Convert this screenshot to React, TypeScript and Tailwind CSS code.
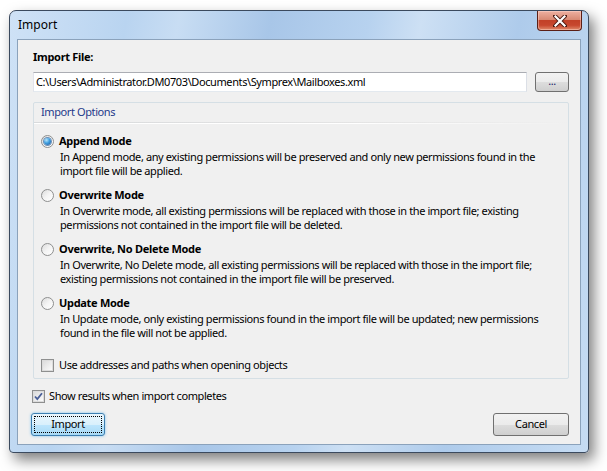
import React from "react";

const FONT = "font-['Noto_Sans','Segoe_UI',sans-serif]";

function Radio({ checked }: { checked?: boolean }) {
  return (
    <span className="relative flex h-[13px] w-[13px] shrink-0 items-center justify-center rounded-full border border-[#8e8f8f] bg-gradient-to-br from-[#dcdcdc] via-[#f4f4f4] to-[#ffffff]">
      {checked && (
        <span className="h-[7px] w-[7px] rounded-full bg-[radial-gradient(circle_at_35%_30%,#b9e6fb_0%,#3f9fe0_45%,#1c4f93_100%)] shadow-[0_0_0_1px_#6c8fb6]" />
      )}
    </span>
  );
}

function Check({ checked }: { checked?: boolean }) {
  return (
    <span className="flex h-[13px] w-[13px] shrink-0 items-center justify-center border border-[#8e8f8f] bg-white">
      <span className="flex h-[11px] w-[11px] items-center justify-center border border-[#dcdcdc] bg-gradient-to-br from-[#dcdcdc] to-[#fbfbfb]">
        {checked && (
          <svg width="9" height="9" viewBox="0 0 9 9">
            <path d="M1 4.5 L3.3 7 L8 1.2" fill="none" stroke="#4a5f97" strokeWidth="1.8" />
          </svg>
        )}
      </span>
    </span>
  );
}

function Option({ label, lines, checked }: { label: string; lines: string[]; checked?: boolean }) {
  return (
    <div className="flex flex-col">
      <div className="flex h-[14px] items-center gap-[5px]">
        <Radio checked={checked} />
        <span className="font-bold tracking-[-0.3px]">{label}</span>
      </div>
      <div className="mt-[2px] pl-[19px] leading-[14px]">
        {lines.map((l) => (
          <div key={l} className="whitespace-nowrap">{l}</div>
        ))}
      </div>
    </div>
  );
}

export default function App() {
  return (
    <div className={`h-[471px] w-[607px] bg-white pl-[9px] pt-[10px] text-[11px] tracking-[-0.4px] text-black ${FONT}`}>
      <div className="flex h-[443px] w-[580px] flex-col rounded-t-[7px] rounded-b-[4px] border border-[#3b4a5e] bg-[linear-gradient(100deg,#cfe2f6_0%,#b9d4f0_18%,#c8ddf3_26%,#a8c6e8_40%,#b7d2ef_55%,#cde0f4_63%,#aecbeb_78%,#c6dcf3_100%)] px-[7px] pb-[7px] shadow-[5px_7px_14px_rgba(0,0,0,0.5)]">
        {/* title bar */}
        <div className="flex h-[28px] items-start justify-between">
          <span className="pl-[1px] pt-[5px] text-[12px] tracking-normal text-[#000]">Import</span>
          <div className="mr-[-1px] flex h-[20px] w-[45px] items-center justify-center rounded-b-[4px] border border-t-0 border-[#5b1f16] bg-[linear-gradient(#eeb0a1_0%,#d98a74_45%,#c24128_50%,#c7472e_75%,#e08a6b_100%)] shadow-[inset_0_0_0_1px_rgba(255,220,210,0.45)]">
            <svg width="14" height="12" viewBox="0 0 14 12">
              <path d="M2 1 L12 11 M12 1 L2 11" stroke="#4a1a12" strokeWidth="4" strokeLinecap="square" />
              <path d="M2.5 1.5 L11.5 10.5 M11.5 1.5 L2.5 10.5" stroke="#fff" strokeWidth="2.2" strokeLinecap="square" />
            </svg>
          </div>
        </div>

        {/* client area */}
        <div className="flex flex-1 flex-col border border-[#8ba2bb] bg-[#f0f0f0] pl-[15px] pr-[11px] pt-[10px]">
          <div className="h-[14px] font-bold leading-[14px] tracking-[-0.3px]">Import File:</div>

          <div className="mt-[8px] flex h-[20px] items-stretch gap-[8px]">
            <div className="flex flex-1 items-center border border-[#abadb3] border-b-[#e3e9ef] border-l-[#e2e3ea] border-r-[#dbdfe6] bg-white px-[2px] whitespace-nowrap">
              C:\Users\Administrator.DM0703\Documents\Symprex\Mailboxes.xml
            </div>
            <button className="flex w-[34px] items-center justify-center rounded-[3px] border border-[#707070] bg-[linear-gradient(#f2f2f2_0%,#ebebeb_50%,#dddddd_51%,#cfcfcf_100%)] pb-[2px] text-[#1a1a66]">
              ...
            </button>
          </div>

          {/* group box */}
          <div className="mt-[10px] flex h-[277px] flex-col rounded-[2px] border border-[#d5dfe5]">
            <div className="flex h-[19px] items-center pl-[7px] text-[#1e3a8a]">Import Options</div>
            <div className="h-px bg-gradient-to-r from-[#d8dadc] via-[#e4e4e4] via-60% to-transparent" />
            <div className="h-px bg-gradient-to-r from-white via-white via-60% to-transparent" />

            <div className="mt-[10px] flex flex-col gap-[10px] pl-[7px]">
              <Option
                checked
                label="Append Mode"
                lines={[
                  "In Append mode, any existing permissions will be preserved and only new permissions found in the",
                  "import file will be applied.",
                ]}
              />
              <Option
                label="Overwrite Mode"
                lines={[
                  "In Overwrite mode, all existing permissions will be replaced with those in the import file; existing",
                  "permissions not contained in the import file will be deleted.",
                ]}
              />
              <Option
                label="Overwrite, No Delete Mode"
                lines={[
                  "In Overwrite, No Delete mode, all existing permissions will be replaced with those in the import file;",
                  "existing permissions not contained in the import file will be preserved.",
                ]}
              />
              <Option
                label="Update Mode"
                lines={[
                  "In Update mode, only existing permissions found in the import file will be updated; new permissions",
                  "found in the file will not be applied.",
                ]}
              />
            </div>

            <div className="mt-[18px] flex h-[14px] items-center gap-[5px] pl-[7px]">
              <Check />
              <span>Use addresses and paths when opening objects</span>
            </div>
          </div>

          <div className="-ml-[1px] mt-[10px] flex h-[14px] items-center gap-[4px]">
            <Check checked />
            <span>Show results when import completes</span>
          </div>

          <div className="mt-[10px] flex items-center justify-between">
            <button className="-ml-[2px] flex h-[23px] w-[74px] items-center justify-center rounded-[3px] border border-[#3c7fb1] bg-[linear-gradient(#eaf6fd_0%,#d9f0fc_50%,#bee6fd_51%,#a7d9f5_100%)] p-[2px] shadow-[0_0_3px_#7fc3ee]">
              <span className="flex h-full w-full items-center justify-center border border-dotted border-black">Import</span>
            </button>
            <button className="flex h-[23px] w-[76px] items-center justify-center rounded-[3px] border border-[#707070] bg-[linear-gradient(#f2f2f2_0%,#ebebeb_50%,#dddddd_51%,#cfcfcf_100%)]">
              Cancel
            </button>
          </div>
        </div>
      </div>
    </div>
  );
}
